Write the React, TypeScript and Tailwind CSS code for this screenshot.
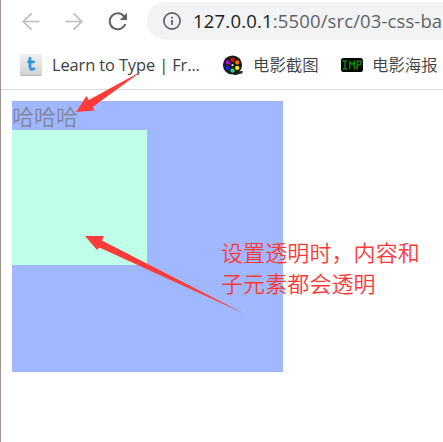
const latin = "font-['Open_Sans','Noto_Sans_CJK_SC',sans-serif]";
const cjk = "font-['Noto_Sans_CJK_SC',sans-serif]";

function BackIcon() {
  return (
    <svg className="h-5 w-5 shrink-0" viewBox="0 0 20 20" fill="none" stroke="#babcbe" strokeWidth="1.7">
      <path d="M18.5 10.5H2.5M10.5 2.3L2.3 10.5L10.5 18.7" />
    </svg>
  );
}

function ForwardIcon() {
  return (
    <svg className="h-5 w-5 shrink-0" viewBox="0 0 20 20" fill="none" stroke="#babcbe" strokeWidth="1.7">
      <path d="M1.5 10.5H17.5M9.5 2.3L17.7 10.5L9.5 18.7" />
    </svg>
  );
}

function ReloadIcon() {
  return (
    <svg className="h-5 w-5 shrink-0" viewBox="0 0 20 20" fill="none">
      <path d="M16.1 5.4A8 8 0 1 0 17.3 13" stroke="#5f6368" strokeWidth="2" />
      <path d="M19 1.8V9H11.8Z" fill="#5f6368" />
    </svg>
  );
}

function InfoIcon() {
  return (
    <svg className="h-5 w-5 shrink-0" viewBox="0 0 20 20" fill="none">
      <circle cx="10" cy="10" r="8.1" stroke="#5f6368" strokeWidth="1.7" />
      <path d="M10 9V14M10 5.7V7.4" stroke="#5f6368" strokeWidth="1.8" />
    </svg>
  );
}

function TypingIcon() {
  return (
    <svg className="h-[22px] w-[22px] shrink-0" viewBox="0 0 22 22">
      <defs>
        <linearGradient id="key" x2="0" y2="1">
          <stop stopColor="#f0f0f0" />
          <stop offset="1" stopColor="#d2d2d2" />
        </linearGradient>
      </defs>
      <rect width="22" height="22" rx="1.5" fill="url(#key)" />
      <path d="M.5 21.3H21.5" stroke="#b9b9b9" />
      <path d="M10 4.4V12.8C10 15.6 11.5 16 13.8 14.8M8.5 7.9H13.5" fill="none" stroke="#3296dc" strokeWidth="2.9" strokeLinecap="round" />
    </svg>
  );
}

function ReelIcon() {
  return (
    <svg className="h-[21px] w-[21px] shrink-0" viewBox="0 0 21 21">
      <path d="M12 18.5C15 19.5 17 16.8 20.5 17.3" fill="none" stroke="#222" strokeWidth="2.6" />
      <circle cx="10.5" cy="10" r="9.6" fill="#1b1b1b" />
      <circle cx="10.5" cy="4.8" r="2.1" fill="#f00" />
      <circle cx="15.2" cy="7.4" r="2.1" fill="#f26b00" />
      <circle cx="15.2" cy="12.9" r="2.1" fill="#ffe600" />
      <circle cx="10.5" cy="15.6" r="2.1" fill="#12e08c" />
      <circle cx="5.7" cy="12.9" r="2.1" fill="#1226ff" />
      <circle cx="5.7" cy="7.4" r="2.1" fill="#b700f2" />
      <circle cx="10.5" cy="10.2" r="1.1" fill="#ddd" />
    </svg>
  );
}

function ImpIcon() {
  return (
    <svg className="h-[14px] w-[22px] shrink-0" viewBox="0 0 22 14">
      <rect width="22" height="14" rx="2.5" fill="#000" />
      <path d="M1.5 3H6.5M4 3V11M1.5 11H6.5M8.7 11.5V2.5M13.3 11.5V2.5M9 4L11 6.5L13 4M16.2 11.5V2.5M16.2 3H18.5Q20 3 20 5T18.5 7H16.2" fill="none" stroke="#078507" strokeWidth="1.5" />
    </svg>
  );
}

export default function App() {
  return (
    <div className="relative h-[442px] w-[443px] overflow-hidden border-l border-[#a09488] bg-white">
      <div className="flex h-[42px] items-center pl-5">
        <BackIcon />
        <div className="w-[23px] shrink-0" />
        <ForwardIcon />
        <div className="w-[24px] shrink-0" />
        <ReloadIcon />
        <div className="ml-[19px] flex h-[38px] min-w-0 flex-1 items-center rounded-l-full bg-[#f1f3f4] pl-[15px]">
          <InfoIcon />
          <div className={`ml-[11px] whitespace-nowrap text-[18.5px] leading-6 text-[#5f6368] ${latin}`}>
            <span className="tracking-[0.2px] text-[#202124]">127.0.0.1</span>
            <span className="tracking-[0.12px]">:5500/src/03-css-ba</span>
          </div>
        </div>
      </div>

      <div className={`flex h-12 items-center border-b border-[#d9dbdd] pb-px pl-[19px] text-[16.4px] leading-6 text-[#3c4043] ${latin}`}>
        <TypingIcon />
        <span className="ml-[10px] w-[170px] shrink-0 whitespace-nowrap tracking-[-0.1px]">Learn to Type | Fr...</span>
        <ReelIcon />
        <span className="ml-[10px] w-[88px] shrink-0 whitespace-nowrap font-[350]">电影截图</span>
        <ImpIcon />
        <span className="ml-[9px] shrink-0 whitespace-nowrap font-[350]">电影海报</span>
      </div>

      <main className="pl-[11px] pt-[11px]">
        <div className="h-[271px] w-[271px] bg-[#a0b8ff]">
          <p className={`h-[29px] text-[22px] font-[350] leading-[29px] text-[#80859b] ${cjk}`}>哈哈哈</p>
          <div className="h-[135px] w-[135px] bg-[#c0ffe8]" />
        </div>
      </main>

      <p className={`absolute left-[220px] top-[236px] whitespace-nowrap text-[22px] font-[350] leading-[31px] tracking-[0.1px] text-[#ff3838] ${cjk}`}>
        设置透明时，内容和
        <br />
        子元素都会透明
      </p>

      <svg className="absolute -left-px top-0 h-[442px] w-[443px]" viewBox="0 0 443 442" fill="#ff3c3a">
        <path d="M76 112L86.5 96L88.7 100L142 71L92.7 107L94.5 110.5Z" />
        <path d="M85 236L104 236L102 240.5L244 313.5L99.3 247.5L97 250Z" />
      </svg>
    </div>
  );
}
